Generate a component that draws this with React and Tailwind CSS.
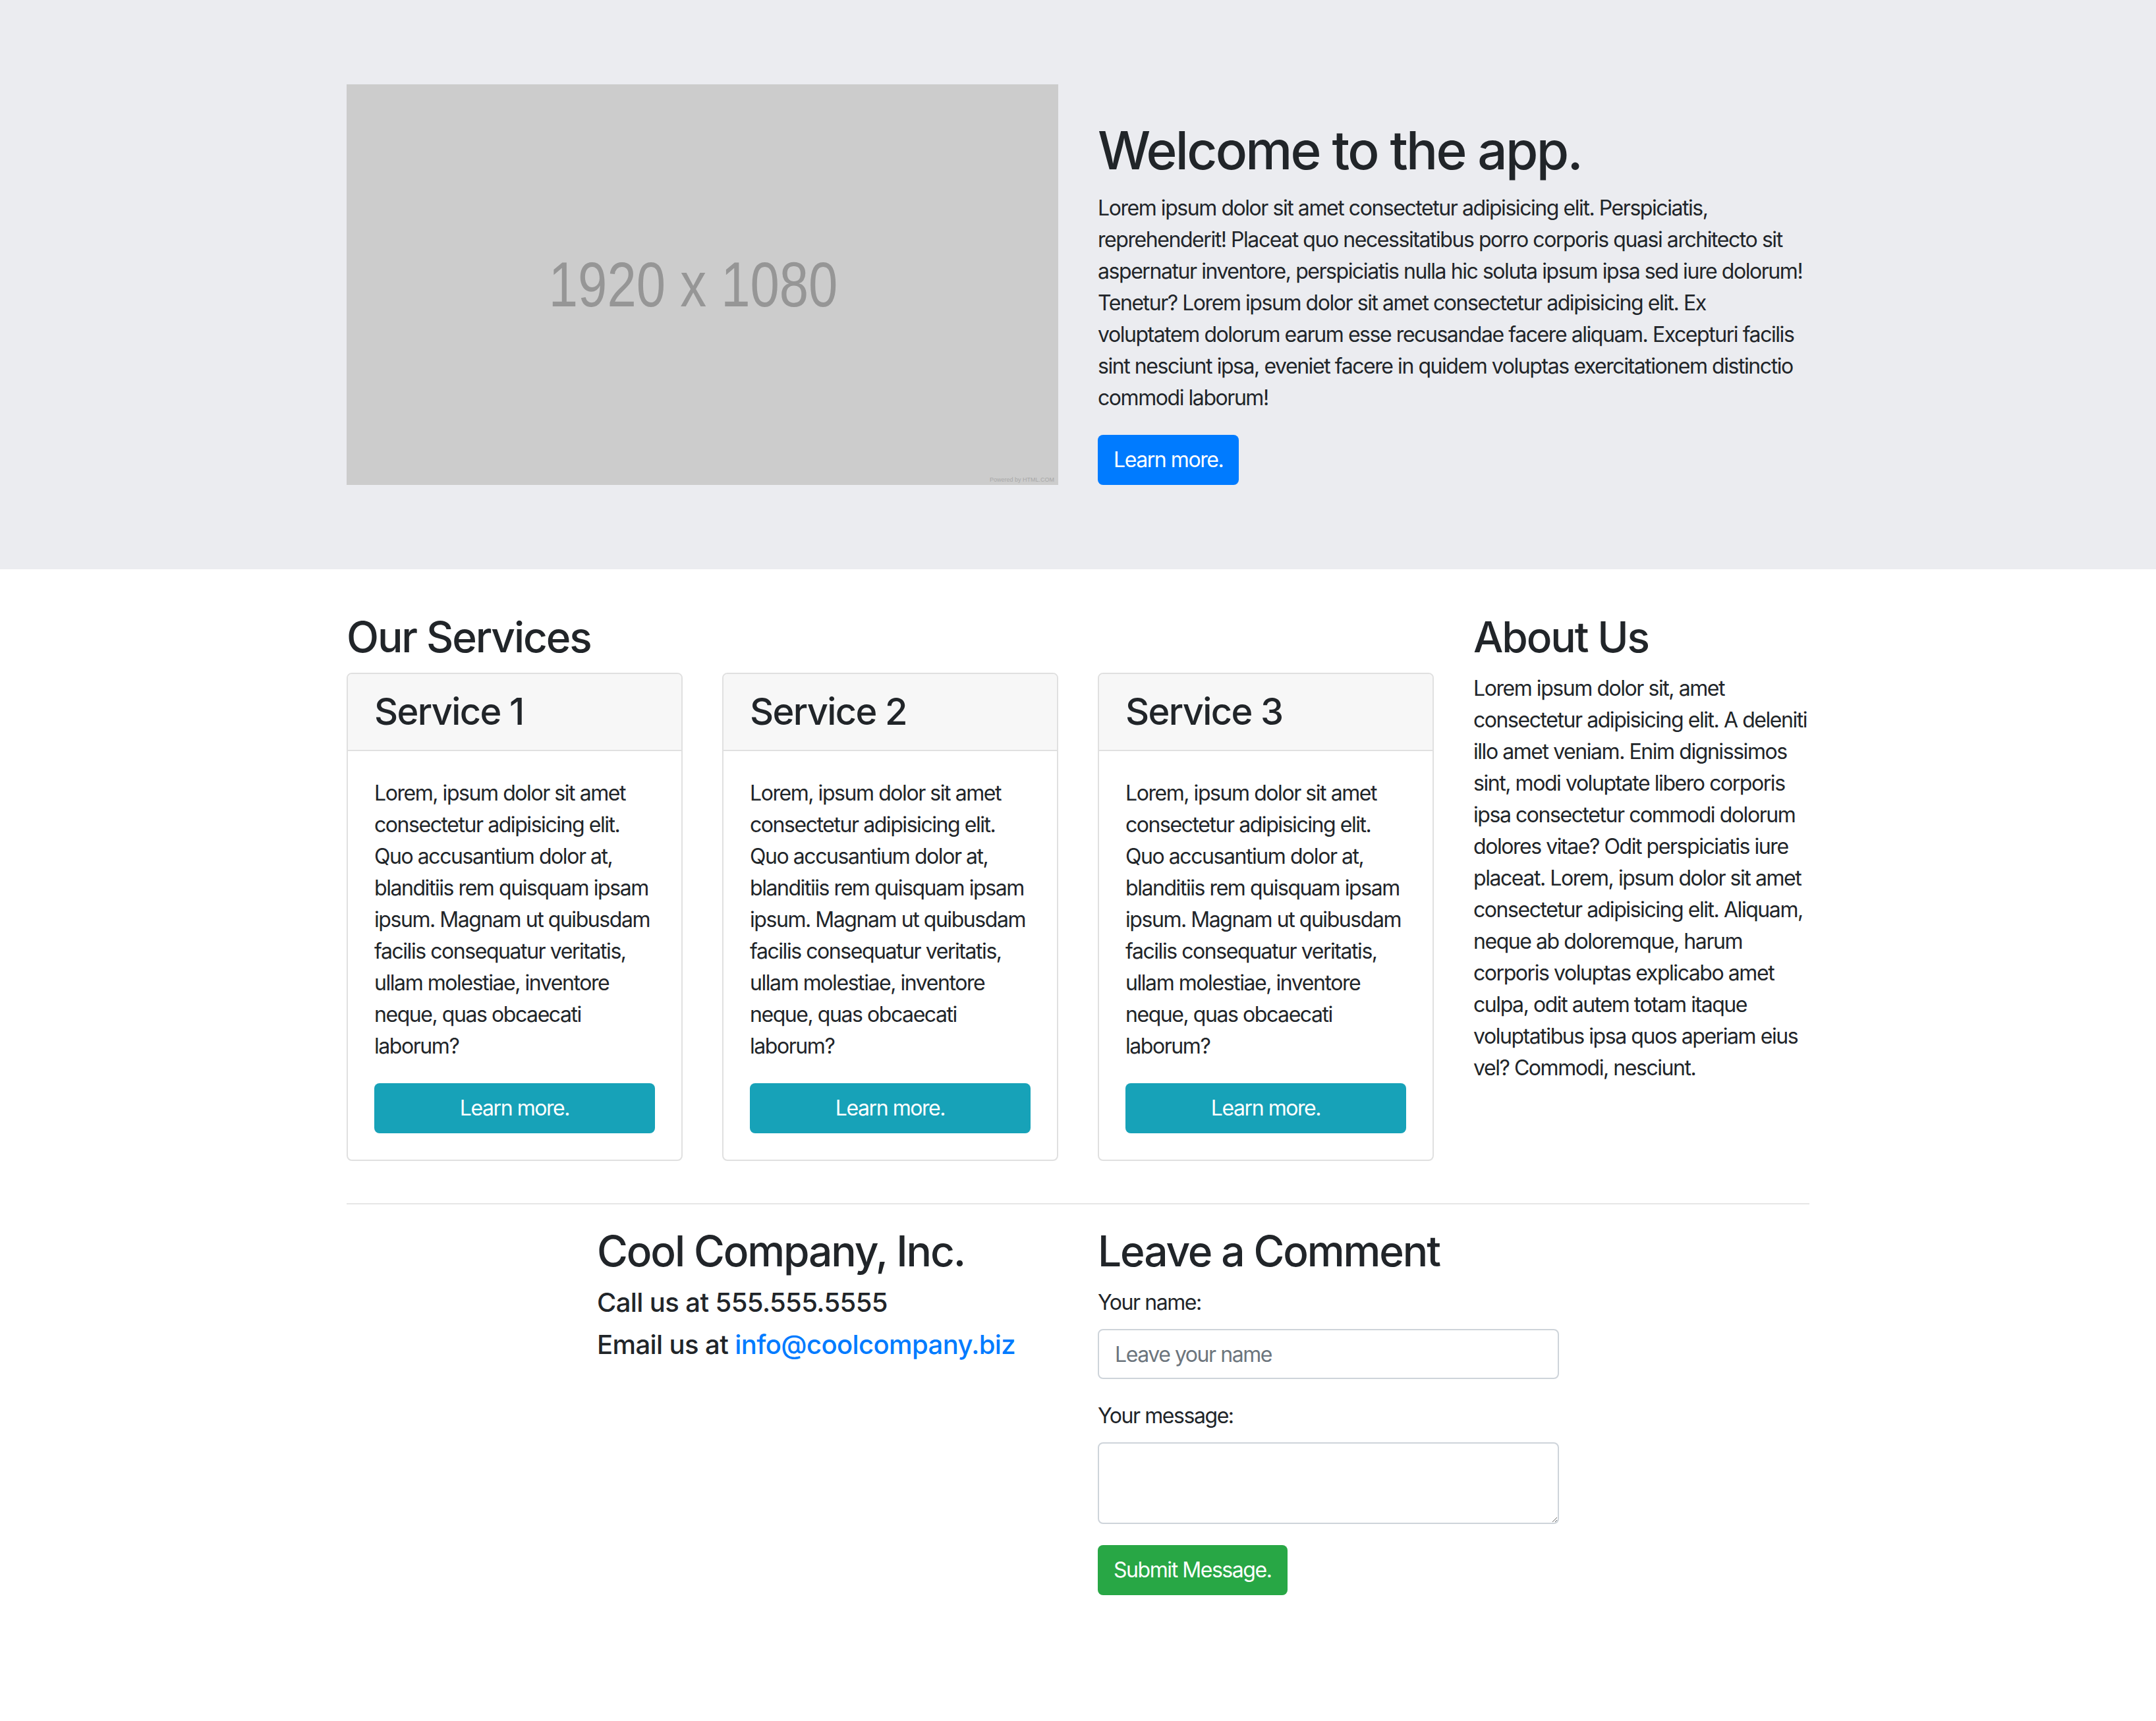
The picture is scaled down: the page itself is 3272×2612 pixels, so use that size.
const services = [1, 2, 3]

const serviceText =
  'Lorem, ipsum dolor sit amet consectetur adipisicing elit. Quo accusantium dolor at, blanditiis rem quisquam ipsam ipsum. Magnam ut quibusdam facilis consequatur veritatis, ullam molestiae, inventore neque, quas obcaecati laborum?'

const h2Class = 'text-[64px] leading-[77px] font-medium tracking-[-0.033em] mb-[16px]'
const h5Class = 'text-[40px] leading-[48px] font-medium tracking-[-0.015em] mb-[16px]'

export default function App() {
  return (
    <div className="min-h-screen bg-white font-['Inter','Noto_Sans',sans-serif] text-[32px] leading-[48px] tracking-[-0.045em] text-[#212529]">
      {/* hero */}
      <section className="bg-[#ebecf0] py-[128px] mb-[64px]">
        <div className="w-[2220px] mx-auto flex items-end gap-[60px]">
          <div className="relative w-[1080px] h-[608px] bg-[#cccccc] flex items-center justify-center shrink-0">
            <span className="pr-[34px] font-['Liberation_Sans',Arial,sans-serif] tracking-normal text-[96px] leading-none text-[#969696] scale-x-[0.83]">
              1920 x 1080
            </span>
            <span className="absolute right-[6px] bottom-[3px] font-['Liberation_Sans',Arial,sans-serif] tracking-normal text-[9px] leading-none text-[#a8a8a8]">
              Powered by HTML.COM
            </span>
          </div>
          <div className="w-[1080px]">
            <h1 className="text-[80px] leading-[96px] font-medium tracking-[-0.034em] mb-[16px]">Welcome to the app.</h1>
            <p className="mb-[32px]">
              Lorem ipsum dolor sit amet consectetur adipisicing elit. Perspiciatis, reprehenderit! Placeat quo
              necessitatibus porro corporis quasi architecto sit aspernatur inventore, perspiciatis nulla hic soluta
              ipsum ipsa sed iure dolorum! Tenetur? Lorem ipsum dolor sit amet consectetur adipisicing elit. Ex
              voluptatem dolorum earum esse recusandae facere aliquam. Excepturi facilis sint nesciunt ipsa, eveniet
              facere in quidem voluptas exercitationem distinctio commodi laborum!
            </p>
            <button className="h-[76px] px-[24px] rounded-[8px] bg-[#007bff] text-white text-[32px] leading-[48px]">
              Learn more.
            </button>
          </div>
        </div>
      </section>

      {/* services + about */}
      <div className="w-[2220px] mx-auto">
        <div className="flex gap-[60px]">
          <div className="w-[1650px]">
            <h2 className={h2Class}>Our Services</h2>
            <div className="flex gap-[60px]">
              {services.map((n) => (
                <div key={n} className="w-[510px] border-2 border-[#e0e0e0] rounded-[8px] overflow-hidden">
                  <div className="bg-[#f7f7f7] border-b-2 border-[#e0e0e0] px-[40px] py-[24px]">
                    <h3 className="text-[56px] leading-[67px] font-medium tracking-[-0.029em]">Service {n}</h3>
                  </div>
                  <div className="p-[40px]">
                    <p className="mb-[32px]">{serviceText}</p>
                    <button className="w-full h-[76px] rounded-[8px] bg-[#17a2b8] text-white text-[32px] leading-[48px]">
                      Learn more.
                    </button>
                  </div>
                </div>
              ))}
            </div>
          </div>
          <div className="w-[510px]">
            <h2 className={h2Class}>About Us</h2>
            <p>
              Lorem ipsum dolor sit, amet consectetur adipisicing elit. A deleniti illo amet veniam. Enim dignissimos
              sint, modi voluptate libero corporis ipsa consectetur commodi dolorum dolores vitae? Odit perspiciatis
              iure placeat. Lorem, ipsum dolor sit amet consectetur adipisicing elit. Aliquam, neque ab doloremque,
              harum corporis voluptas explicabo amet culpa, odit autem totam itaque voluptatibus ipsa quos aperiam eius
              vel? Commodi, nesciunt.
            </p>
          </div>
        </div>

        <hr className="mt-[64px] mb-[32px] border-t-2 border-[#e6e6e6]" />

        {/* contact + form */}
        <div className="flex gap-[60px] pl-[380px] pb-[190px]">
          <div className="w-[700px]">
            <h2 className={h2Class}>Cool Company, Inc.</h2>
            <h5 className={h5Class}>Call us at 555.555.5555</h5>
            <h5 className={h5Class}>
              Email us at <a className="text-[#007bff]">info@coolcompany.biz</a>
            </h5>
          </div>
          <div className="w-[700px]">
            <h2 className={h2Class}>Leave a Comment</h2>
            <div className="mb-[32px]">
              <label className="block mb-[16px]">Your name:</label>
              <input
                type="text"
                placeholder="Leave your name"
                className="block w-full h-[76px] px-[24px] py-[12px] border-2 border-[#ced4da] rounded-[8px] bg-white text-[32px] placeholder:text-[#6c757d] outline-none"
              />
            </div>
            <div className="mb-[32px]">
              <label className="block mb-[16px]">Your message:</label>
              <textarea
                rows={2}
                className="block w-full h-[124px] px-[24px] py-[12px] border-2 border-[#ced4da] rounded-[8px] bg-white text-[32px] leading-[48px] outline-none"
              />
            </div>
            <button className="h-[76px] px-[24px] rounded-[8px] bg-[#28a745] text-white text-[32px] leading-[48px]">
              Submit Message.
            </button>
          </div>
        </div>
      </div>
    </div>
  )
}
